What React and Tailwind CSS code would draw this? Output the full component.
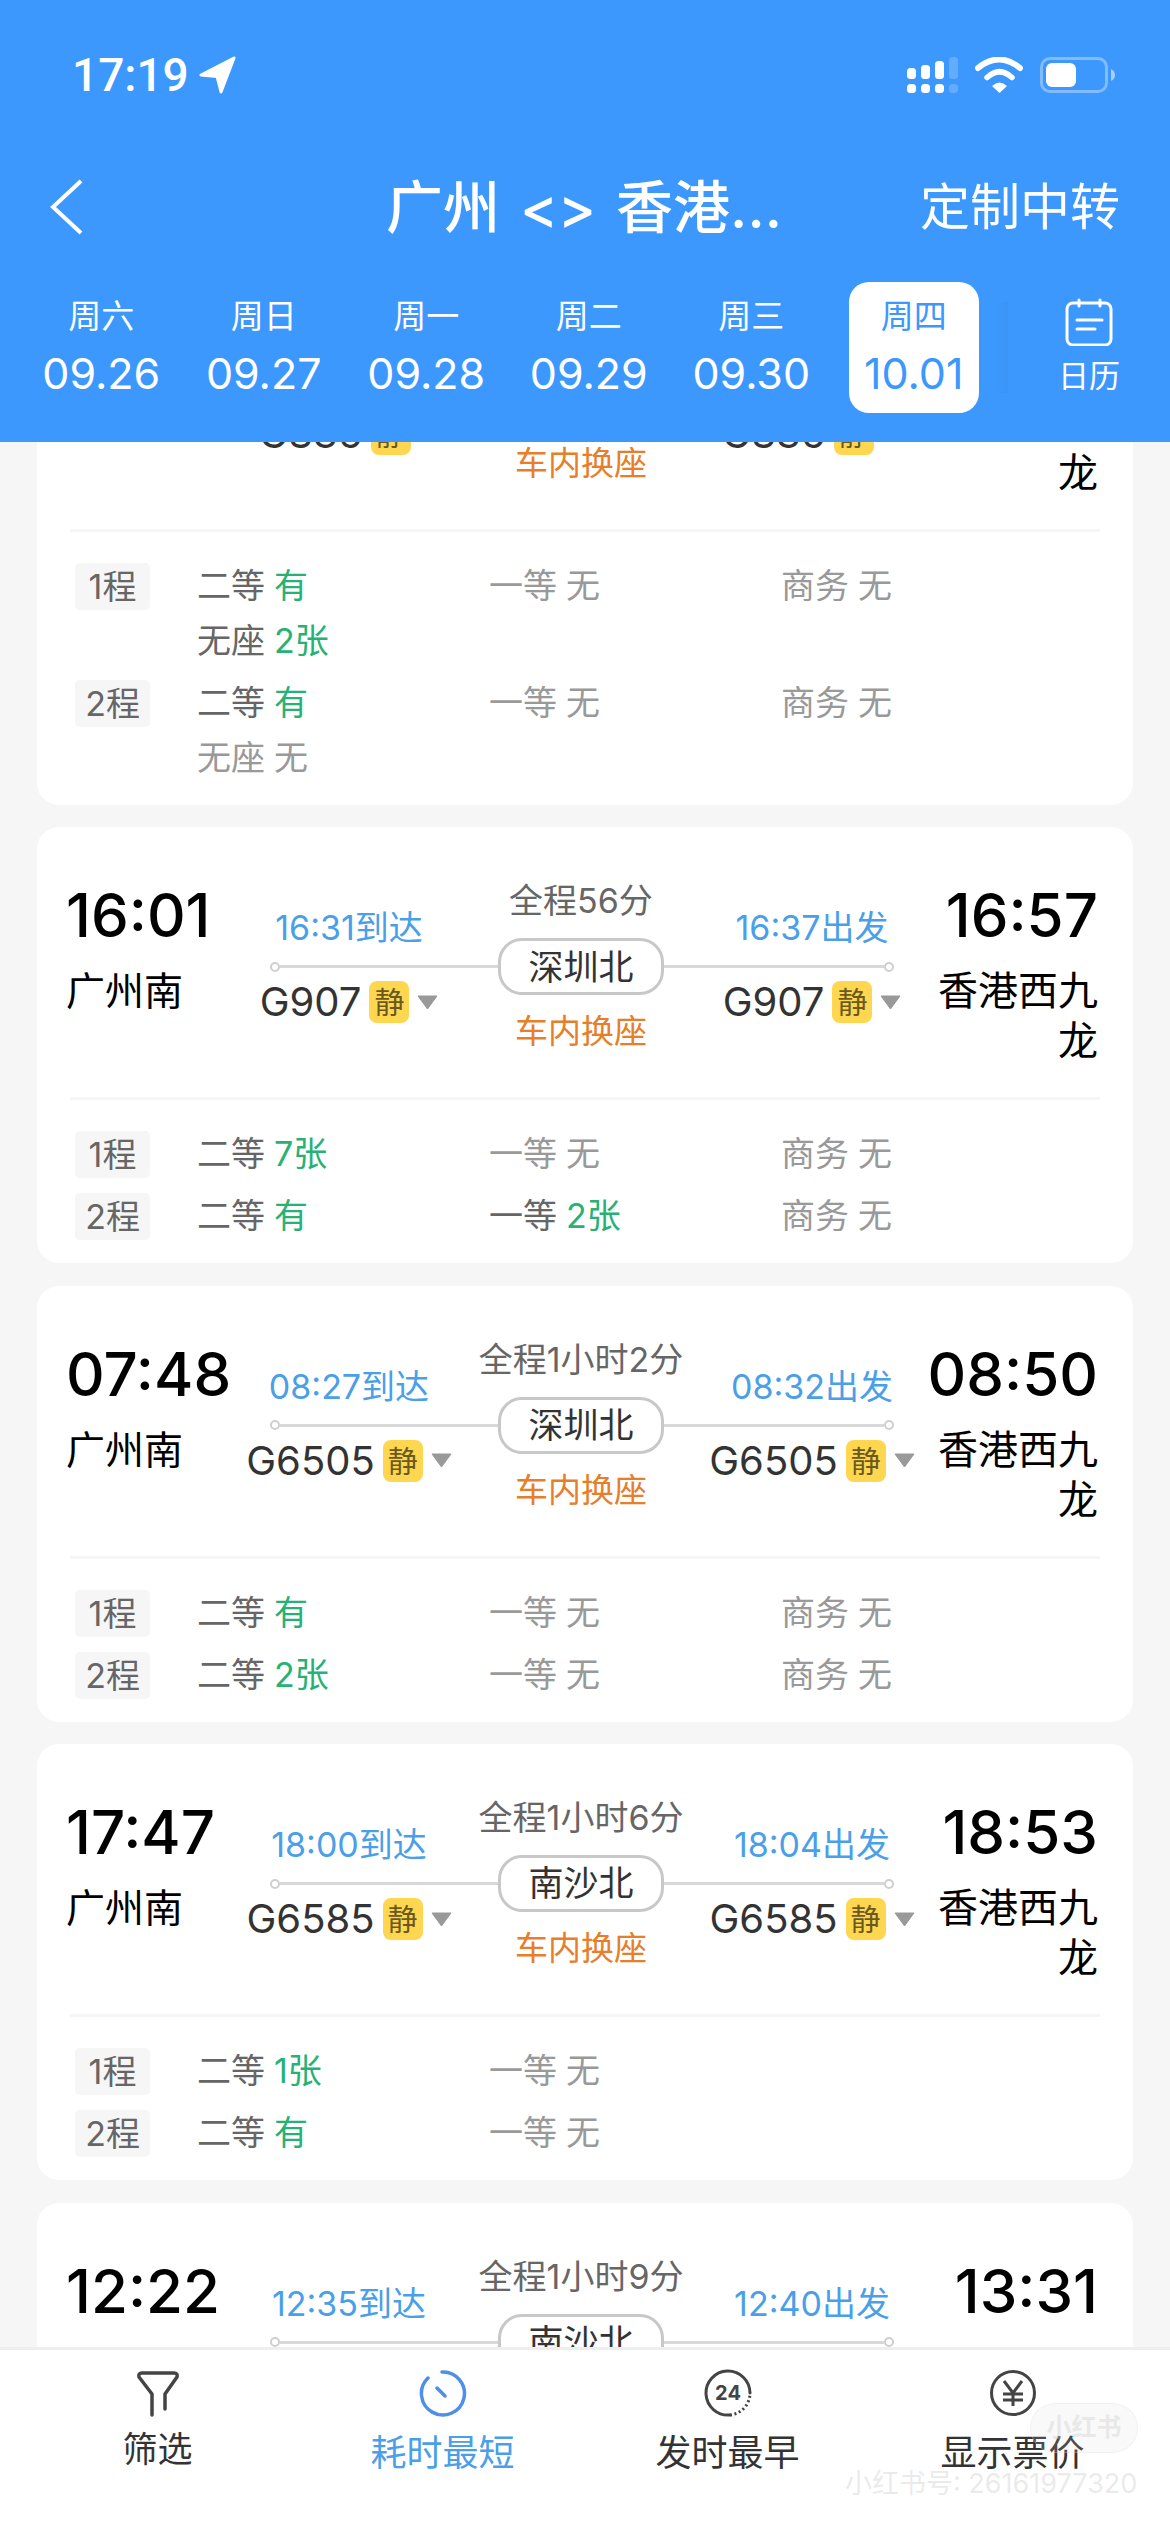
import React from "react";

const tabs = [
  ["周六", "09.26"],
  ["周日", "09.27"],
  ["周一", "09.28"],
  ["周二", "09.29"],
  ["周三", "09.30"],
  ["周四", "10.01", true],
];

const cards = [
  {
    from: "15:12", to: "16:08", dur: "全程56分", arr: "15:36到达", dep: "15:42出发", via: "深圳北", train: "G836",
    rows: [
      [["二等", "有"], ["一等", "无"], ["商务", "无"], ["无座", "2张"]],
      [["二等", "有"], ["一等", "无"], ["商务", "无"], ["无座", "无"]],
    ],
  },
  {
    from: "16:01", to: "16:57", dur: "全程56分", arr: "16:31到达", dep: "16:37出发", via: "深圳北", train: "G907",
    rows: [
      [["二等", "7张"], ["一等", "无"], ["商务", "无"]],
      [["二等", "有"], ["一等", "2张"], ["商务", "无"]],
    ],
  },
  {
    from: "07:48", to: "08:50", dur: "全程1小时2分", arr: "08:27到达", dep: "08:32出发", via: "深圳北", train: "G6505",
    rows: [
      [["二等", "有"], ["一等", "无"], ["商务", "无"]],
      [["二等", "2张"], ["一等", "无"], ["商务", "无"]],
    ],
  },
  {
    from: "17:47", to: "18:53", dur: "全程1小时6分", arr: "18:00到达", dep: "18:04出发", via: "南沙北", train: "G6585",
    rows: [
      [["二等", "1张"], ["一等", "无"]],
      [["二等", "有"], ["一等", "无"]],
    ],
  },
  {
    from: "12:22", to: "13:31", dur: "全程1小时9分", arr: "12:35到达", dep: "12:40出发", via: "南沙北", train: "G6523",
    rows: [
      [["二等", "有"], ["一等", "无"]],
      [["二等", "有"], ["一等", "无"]],
    ],
  },
];

function Train({ name }) {
  return (
    <div className="mt-[12px] flex h-[44px] w-[238px] items-center justify-center whitespace-nowrap">
      <span className="text-[40px] leading-[44px] text-[#333333]">{name}</span>
      <span className="ml-[8px] flex h-[42px] w-[40px] items-center justify-center rounded-[8px] bg-[#ffd650] text-[30px] leading-[42px] text-[#6b5a1e]">静</span>
      <svg className="ml-[8px] shrink-0" width="21" height="15" viewBox="0 0 21 15">
        <path d="M1 1 H20 L10.5 14 Z" fill="#999999" stroke="#999999" strokeLinejoin="round" />
      </svg>
    </div>
  );
}

function Ring() {
  return <span className="h-[10px] w-[10px] shrink-0 rounded-full border-2 border-[#cfcfcf] bg-white" />;
}

function Seat({ label, value }) {
  const none = value === "无";
  return (
    <div className="h-[47px] whitespace-nowrap text-[34px] leading-[45px]">
      <span className={none ? "text-[#999999]" : "text-[#666666]"}>{label}</span>
      <span className={none ? "ml-[9px] text-[#999999]" : "ml-[9px] text-[#27b175]"}>{value}</span>
    </div>
  );
}

function Card({ c }) {
  return (
    <div className="rounded-[22px] bg-white">
      <div className="flex h-[270px] pt-[52px] pr-[35px] pl-[29px] text-black">
        <div className="w-[164px] shrink-0">
          <div className="h-[72px] whitespace-nowrap text-[60px] leading-[72px] font-medium">{c.from}</div>
          <div className="mt-[15px] text-[39px] leading-[50px]">广州南</div>
        </div>
        <div className="w-[268px] shrink-0">
          <div className="mt-[27px] w-[238px] text-center text-[34px] leading-[44px] text-[#4a9fe8]">{c.arr}</div>
          <div className="mt-[15px] ml-[40px] flex h-[3px] items-center">
            <Ring />
            <span className="h-[3px] flex-1 bg-[#d8d8d8]" />
          </div>
          <Train name={c.train} />
        </div>
        <div className="flex w-[166px] shrink-0 flex-col items-center">
          <div className="h-[44px] whitespace-nowrap text-[34px] leading-[44px] text-[#666666]">{c.dur}</div>
          <div className="mt-[15px] flex h-[57px] w-[166px] items-center justify-center rounded-[24px] border-[3px] border-[#c8c8c8] bg-white text-[35px] text-[#333333]">{c.via}</div>
          <div className="mt-[14px] h-[44px] whitespace-nowrap text-[33px] leading-[44px] text-[#e67e2a]">车内换座</div>
        </div>
        <div className="w-[266px] shrink-0">
          <div className="mt-[27px] ml-[29px] w-[238px] text-center text-[34px] leading-[44px] text-[#4a9fe8]">{c.dep}</div>
          <div className="mt-[15px] mr-[36px] flex h-[3px] items-center">
            <span className="h-[3px] flex-1 bg-[#d8d8d8]" />
            <Ring />
          </div>
          <div className="ml-[29px]">
            <Train name={c.train} />
          </div>
        </div>
        <div className="min-w-0 flex-1 text-right">
          <div className="flex h-[72px] justify-end whitespace-nowrap text-[60px] leading-[72px] font-medium">{c.to}</div>
          <div className="mt-[15px] text-[40px] leading-[50px]">香港西九龙</div>
        </div>
      </div>
      <div className="mx-[33px] h-[3px] bg-[#f6f6f6]" />
      <div className="flex flex-col gap-[15px] pt-[31px] pr-[33px] pb-[23px] pl-[38px]">
        {c.rows.map((seats, i) => (
          <div key={i} className="flex">
            <div className="flex h-[47px] w-[75px] shrink-0 items-center justify-center rounded-[5px] bg-[#f6f6f6] text-[34px] leading-[45px] text-[#666666]">{i + 1}程</div>
            <div className="ml-[47px] grid flex-1 grid-cols-[292px_292px_292px] gap-y-[8px]">
              {seats.map((s, j) => (
                <Seat key={j} label={s[0]} value={s[1]} />
              ))}
            </div>
          </div>
        ))}
      </div>
    </div>
  );
}

function Signal() {
  return (
    <svg width="51" height="36" viewBox="0 0 51 36" fill="#ffffff">
      <rect x="0" y="11" width="9" height="11" rx="3.5" />
      <rect x="14" y="8" width="9" height="14" rx="3.5" />
      <rect x="28" y="4" width="9" height="18" rx="3.5" />
      <rect x="42" y="0" width="9" height="22" rx="3.5" opacity="0.2" />
      <rect x="0" y="27" width="9" height="9" rx="3.5" />
      <rect x="14" y="27" width="9" height="9" rx="3.5" />
      <rect x="28" y="27" width="9" height="9" rx="3.5" />
      <rect x="42" y="27" width="9" height="9" rx="3.5" opacity="0.2" />
    </svg>
  );
}

function Wifi() {
  return (
    <svg width="48" height="36" viewBox="0 0 48 36" fill="none">
      <path d="M3 11 Q24 -6 45 11" stroke="#fff" strokeWidth="6" strokeLinecap="round" />
      <path d="M12 20.5 Q24.5 9 37 20.5" stroke="#fff" strokeWidth="5.5" strokeLinecap="round" />
      <path d="M24.5 36 L17 29 Q24.5 22 32 29 Z" fill="#fff" />
    </svg>
  );
}

function Battery() {
  return (
    <div className="flex items-center">
      <div className="flex h-[36px] w-[68px] items-center rounded-[10px] border-[3px] border-[#82bcfe] pl-[3px]">
        <div className="h-[24px] w-[30px] rounded-[6px] bg-white" />
      </div>
      <svg className="ml-[3px]" width="4" height="12" viewBox="0 0 4 12">
        <path d="M0 0 Q4 2 4 6 Q4 10 0 12 Z" fill="#a4cffe" />
      </svg>
    </div>
  );
}

function Header() {
  return (
    <div className="h-[442px] shrink-0 bg-[#3d98fd] text-white">
      <div className="flex h-[150px] items-center pr-[55px] pl-[72px]">
        <span className="w-[127px] font-[Roboto,sans-serif] text-[46px] leading-none font-medium">17:19</span>
        <svg className="shrink-0" width="38" height="38" viewBox="0 0 38 38">
          <path d="M35 2 L2 19 L18 20.5 L22 36 Z" fill="#fff" stroke="#fff" strokeWidth="3" strokeLinejoin="round" />
        </svg>
        <div className="flex-1" />
        <Signal />
        <span className="w-[17px]" />
        <Wifi />
        <span className="w-[17px]" />
        <Battery />
      </div>
      <div className="flex h-[114px] items-center">
        <svg className="ml-[50px] shrink-0" width="34" height="56" viewBox="0 0 34 56" fill="none">
          <path d="M31 2 L3 28 L31 54" stroke="#fff" strokeWidth="4" />
        </svg>
        <div className="ml-[302px] flex gap-[20px] text-[57px] leading-none font-medium whitespace-nowrap">
          <span>广州</span>
          <span>&lt;&gt;</span>
          <span>香港...</span>
        </div>
        <div className="mr-[50px] ml-auto text-[50px] leading-none whitespace-nowrap">定制中转</div>
      </div>
      <div className="mt-[18px] flex h-[131px] items-stretch pl-[20px]">
        {tabs.map(([d, n, active]) => (
          <div key={n} className="flex w-[162.5px] shrink-0 justify-center">
            <div className={active ? "flex w-[130px] flex-col items-center rounded-[20px] bg-white pt-[12px] text-[#3d98fd]" : "flex w-[130px] flex-col items-center pt-[12px]"}>
              <div className="text-[33px] leading-[44px]">{d}</div>
              <div className="mt-[9px] text-[43px] leading-[52px] whitespace-nowrap">{n}</div>
            </div>
          </div>
        ))}
        <div className="my-[20px] w-[13px] bg-gradient-to-r from-[#3d98fd] to-[#3a94f8]" />
        <div className="flex flex-1 flex-col items-center pt-[16px]">
          <svg width="48" height="48" viewBox="0 0 48 48" fill="none" stroke="#fff" strokeLinecap="round">
            <rect x="2" y="5" width="44" height="42" rx="6" strokeWidth="3" />
            <path d="M14 2 V8 M35 2 V8" strokeWidth="3" />
            <path d="M12 22 H37 M12 31 H30" strokeWidth="3" />
          </svg>
          <div className="mt-[8px] text-[31px] leading-[44px]">日历</div>
        </div>
      </div>
    </div>
  );
}

function BottomItem({ icon, label, className }) {
  return (
    <div className="flex w-[285px] flex-col items-center pt-[19px]">
      <div className="h-[48px] w-[48px]">{icon}</div>
      <div className={className}>{label}</div>
    </div>
  );
}

function BottomBar() {
  const txt = "mt-[14px] text-[36px] leading-[44px] text-[#333333]";
  return (
    <div className="flex h-[185px] shrink-0 border-t-[3px] border-[#eeeeee] bg-white px-[15px]">
      <BottomItem
        label="筛选"
        className="mt-[10px] text-[35px] leading-[44px] text-[#333333]"
        icon={
          <svg width="48" height="48" viewBox="0 0 48 48" fill="none" stroke="#444" strokeWidth="3.5" strokeLinecap="round" strokeLinejoin="round">
            <path d="M18 46 V25 L5 8 Q4 4 8 4 H40 Q44 4 43 8 L31 25 V40" />
          </svg>
        }
      />
      <BottomItem
        label="耗时最短"
        className="mt-[14px] text-[36px] leading-[44px] text-[#4a9fe8]"
        icon={
          <svg width="48" height="48" viewBox="0 0 48 48" fill="none" stroke="#4f8fe9" strokeLinecap="round">
            <path d="M23 3 A21.5 21.5 0 1 1 9 9" strokeWidth="3.5" />
            <path d="M18 19 L26 27" strokeWidth="3.5" />
          </svg>
        }
      />
      <BottomItem
        label="发时最早"
        className={txt}
        icon={
          <svg width="48" height="48" viewBox="0 0 48 48" fill="none" stroke="#444">
            <path d="M46 24 A22 22 0 1 0 26 46" strokeWidth="3" strokeLinecap="round" />
            <path d="M26 46 A22 22 0 0 0 46 24" strokeWidth="3" strokeDasharray="2 2.6" />
            <text x="24" y="31" textAnchor="middle" fontSize="20" fontWeight="700" fill="#444" stroke="none">24</text>
          </svg>
        }
      />
      <BottomItem
        label="显示票价"
        className={txt}
        icon={
          <svg width="48" height="48" viewBox="0 0 48 48" fill="none" stroke="#444" strokeWidth="3">
            <circle cx="24" cy="24" r="21.5" />
            <path d="M15 12 L24 24 L33 12 M24 24 V37 M14 25 H34 M14 31 H34" />
          </svg>
        }
      />
    </div>
  );
}

export default function App() {
  return (
    <div className="relative flex h-[2532px] w-[1170px] flex-col overflow-hidden bg-[#f6f6f6] font-[Inter,'Noto_Sans_CJK_SC',sans-serif]">
      <Header />
      <div className="min-h-0 flex-1 overflow-hidden px-[37px]">
        <div className="mt-[-183px] flex flex-col gap-[22.4px]">
          {cards.map((c, i) => (
            <Card key={i} c={c} />
          ))}
        </div>
      </div>
      <BottomBar />
      <div className="absolute top-[2403px] left-[1030px] flex h-[50px] w-[108px] items-center justify-center rounded-[25px] border border-[#dddddd]/30 bg-[#d8d8d8]/15 text-[25px] font-bold whitespace-nowrap text-[#c8c8c8]/35">小红书</div>
      <div className="absolute top-[2468px] left-[845px] text-[27px] leading-[32px] whitespace-nowrap text-[#c4c4c4]/35">小红书号: 26161977320</div>
    </div>
  );
}
